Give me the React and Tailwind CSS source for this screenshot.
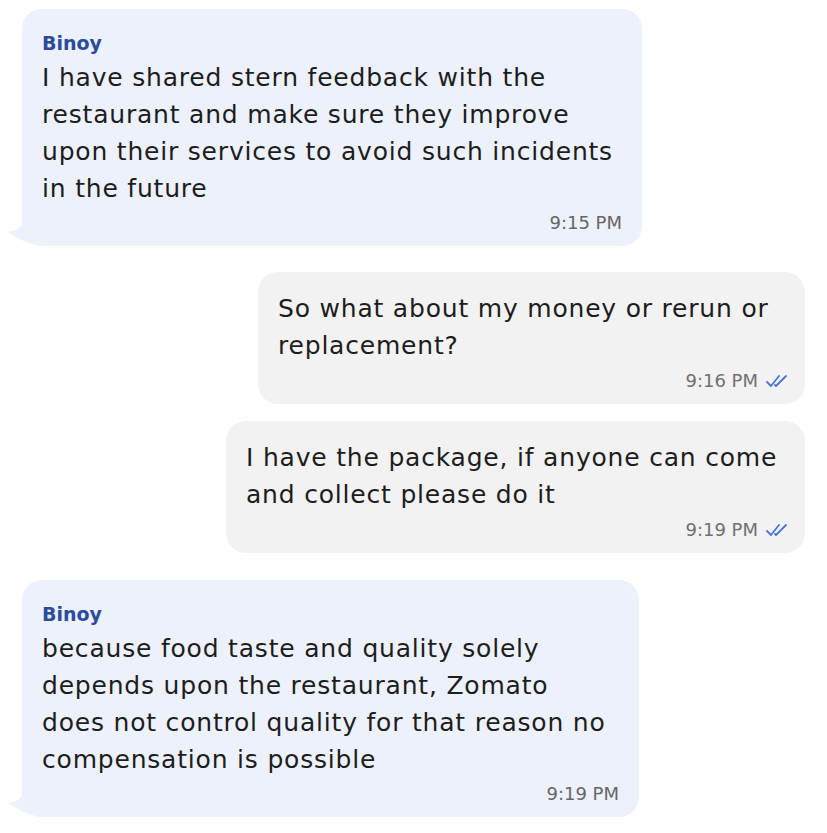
const font = { fontFamily: "'DejaVu Sans', sans-serif" };

const Ticks = () => (
  <svg width="24" height="14" viewBox="0 0 24 14" fill="none" className="ml-[8px]">
    <path d="M1 8 L5 12 L13 2" stroke="#4a74d8" strokeWidth="1.8" strokeLinecap="round" strokeLinejoin="round" />
    <path d="M9 11 L10 12 L20 2" stroke="#4a74d8" strokeWidth="1.8" strokeLinecap="round" strokeLinejoin="round" />
  </svg>
);

const Tail = () => (
  <svg
    width="40"
    height="26"
    viewBox="0 0 40 26"
    className="absolute left-[-14px] bottom-0"
  >
    <path d="M14 0 C14 6 12 10 0 12 C10 18 18 24 34 26 L40 26 L40 0 Z" fill="#edf1fc" />
  </svg>
);

const Incoming = ({ lines, time, width }) => (
  <div className={`relative self-start ml-[22px] ${width}`}>
    <Tail />
    <div className="relative rounded-[20px] bg-[#edf1fc] pt-[18px] pb-[11px] px-[20px]">
      <div className="text-[19px] leading-[32px] font-bold text-[#2c4b9c]">Binoy</div>
      <div className="text-[25px] leading-[37px] tracking-[0.8px] text-[#1d1d1d]">
        {lines.map((l, i) => (
          <div key={i}>{l}</div>
        ))}
      </div>
      <div className="mt-[4px] flex justify-end text-[18px] leading-[24px] text-[#666666]">{time}</div>
    </div>
  </div>
);

const Outgoing = ({ lines, time, width }) => (
  <div className={`self-end mr-[22px] rounded-[20px] bg-[#f2f2f2] pt-[18px] pb-[11px] pl-[20px] pr-[15px] ${width}`}>
    <div className="text-[25px] leading-[37px] tracking-[0.8px] text-[#1d1d1d]">
      {lines.map((l, i) => (
        <div key={i}>{l}</div>
      ))}
    </div>
    <div className="mt-[5px] flex items-center justify-end text-[18px] leading-[24px] text-[#707070]">
      <span>{time}</span>
      <Ticks />
    </div>
  </div>
);

export default function App() {
  return (
    <div style={font} className="w-[827px] h-[833px] bg-white flex flex-col pt-[9px] overflow-hidden">
      <Incoming
        width="w-[620px]"
        time="9:15 PM"
        lines={[
          "I have shared stern feedback with the",
          "restaurant and make sure they improve",
          "upon their services to avoid such incidents",
          "in the future",
        ]}
      />
      <div className="mt-[26px]">
        <div className="flex flex-col">
          <Outgoing
            width="w-[547px]"
            time="9:16 PM"
            lines={["So what about my money or rerun or", "replacement?"]}
          />
          <div className="mt-[17px] flex flex-col">
            <Outgoing
              width="w-[579px]"
              time="9:19 PM"
              lines={["I have the package, if anyone can come", "and collect please do it"]}
            />
          </div>
        </div>
      </div>
      <div className="mt-[27px] flex flex-col">
        <Incoming
          width="w-[617px]"
          time="9:19 PM"
          lines={[
            "because food taste and quality solely",
            "depends upon the restaurant, Zomato",
            "does not control quality for that reason no",
            "compensation is possible",
          ]}
        />
      </div>
    </div>
  );
}
